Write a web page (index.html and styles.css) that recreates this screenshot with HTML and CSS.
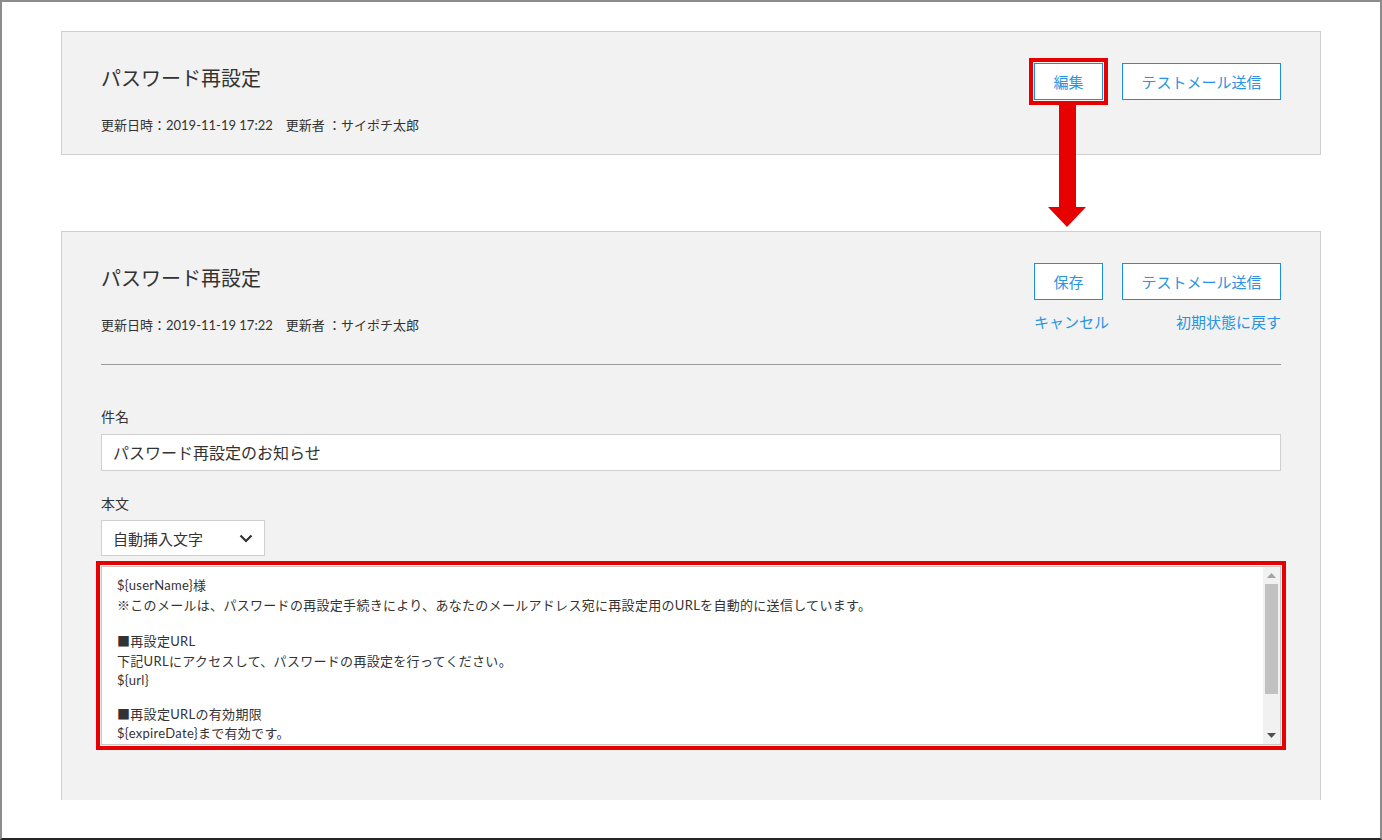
FILE: index.html
```html
<!DOCTYPE html>
<html lang="ja">
<head>
<meta charset="utf-8">
<title>パスワード再設定</title>
<link rel="stylesheet" href="styles.css">
</head>
<body>
<div class="frame">
  <section class="card card-view">
    <div class="card-head">
      <div class="head-left">
        <h2 class="title">パスワード再設定</h2>
        <p class="meta"><span>更新日時：2019-11-19 17:22</span><span class="by">更新者 ：サイポチ太郎</span></p>
      </div>
      <div class="head-right">
        <div class="btns">
          <button class="btn btn-small highlight">編集</button>
          <button class="btn btn-wide">テストメール送信</button>
        </div>
      </div>
    </div>
  </section>

  <svg class="arrow" width="38" height="124" viewBox="0 0 38 124"><polygon points="11,0 28,0 28,104 38,104 19,124 0,104 11,104" fill="#e60000"/></svg>

  <section class="card card-edit">
    <div class="card-head">
      <div class="head-left">
        <h2 class="title">パスワード再設定</h2>
        <p class="meta"><span>更新日時：2019-11-19 17:22</span><span class="by">更新者 ：サイポチ太郎</span></p>
      </div>
      <div class="head-right">
        <div class="btns">
          <button class="btn btn-small">保存</button>
          <button class="btn btn-wide">テストメール送信</button>
        </div>
        <div class="links">
          <a class="link">キャンセル</a>
          <a class="link">初期状態に戻す</a>
        </div>
      </div>
    </div>
    <hr class="divider">
    <label class="label label-subject">件名</label>
    <div class="input">パスワード再設定のお知らせ</div>
    <label class="label label-body">本文</label>
    <div class="select">
      <span>自動挿入文字</span>
      <svg class="chev" width="14" height="9" viewBox="0 0 14 9"><polyline points="1.5,1.5 7,7 12.5,1.5" fill="none" stroke="#333" stroke-width="2.2"/></svg>
    </div>
    <div class="textarea highlight">
      <div class="ta-content">
        <p>${userName}様</p>
        <p>※このメールは、パスワードの再設定手続きにより、あなたのメールアドレス宛に再設定用のURLを自動的に送信しています。</p>
        <p class="gap gap-a"></p>
        <p>■再設定URL</p>
        <p>下記URLにアクセスして、パスワードの再設定を行ってください。</p>
        <p>${url}</p>
        <p class="gap gap-b"></p>
        <p>■再設定URLの有効期限</p>
        <p>${expireDate}まで有効です。</p>
      </div>
      <div class="scrollbar">
        <div class="sb-btn"><svg width="9" height="5" viewBox="0 0 9 5"><polygon points="0,5 4.5,0 9,5" fill="#a3a3a3"/></svg></div>
        <div class="sb-track"><div class="sb-thumb"></div></div>
        <div class="sb-btn"><svg width="9" height="5" viewBox="0 0 9 5"><polygon points="0,0 9,0 4.5,5" fill="#505050"/></svg></div>
      </div>
    </div>
  </section>
</div>
</body>
</html>
```

FILE: styles.css
```css
* { box-sizing: border-box; }
html, body { margin: 0; padding: 0; background: #fff; }
body {
  font-family: Lato, "Noto Sans CJK JP", sans-serif;
  color: #333;
}
.frame {
  position: relative;
  width: 1382px;
  height: 840px;
  border: 2px solid #8c8c8c;
  border-bottom-color: #262626;
  padding: 29px 0 0 59px;
  overflow: hidden;
}
.card {
  width: 1260px;
  background: #f2f2f2;
  border: 1px solid #cfcfcf;
  padding: 31px 39px 19px 39px;
}
.card-edit {
  margin-top: 76px;
  padding-bottom: 55px;
  border-bottom: none;
}
.card-head {
  display: flex;
  justify-content: space-between;
  align-items: flex-start;
}
.title {
  margin: 0;
  font-size: 20px;
  font-weight: normal;
  line-height: 30px;
  color: #333;
}
.meta {
  margin: 22px 0 0;
  font-size: 13px;
  line-height: 20px;
  color: #333;
}
.meta .by { margin-left: 13px; }
.head-right {
  display: flex;
  flex-direction: column;
  width: 247px;
}
.btns {
  display: flex;
  gap: 19px;
}
.btn {
  height: 37px;
  background: #fff;
  border: 1px solid #1a8fe3;
  color: #2a94e2;
  font-family: Lato, "Noto Sans CJK JP", sans-serif;
  font-size: 15px;
  padding: 0;
  cursor: pointer;
}
.btn-small { width: 69px; }
.btn-wide { width: 159px; }
.highlight {
  outline: 4px solid #e60000;
  outline-offset: 1px;
}
.links {
  display: flex;
  justify-content: space-between;
  margin-top: 11px;
}
.link {
  font-size: 15px;
  line-height: 22px;
  color: #2a94e2;
  cursor: pointer;
}
.arrow {
  position: absolute;
  left: 1046px;
  top: 101px;
}
.divider {
  margin: 29px 0 0;
  border: none;
  border-top: 1px solid #9a9a9a;
  height: 0;
}
.label {
  display: block;
  font-size: 14px;
  line-height: 20px;
  color: #333;
}
.label-subject { margin-top: 42px; }
.label-body { margin-top: 23px; }
.input {
  margin-top: 7px;
  height: 37px;
  background: #fff;
  border: 1px solid #cfcfcf;
  padding: 0 11px;
  font-size: 16px;
  line-height: 35px;
  color: #333;
}
.select {
  margin-top: 6px;
  width: 164px;
  height: 36px;
  background: #fff;
  border: 1px solid #cfcfcf;
  padding: 0 10px 0 11px;
  display: flex;
  align-items: center;
  justify-content: space-between;
  font-size: 15px;
  color: #333;
}
.chev { margin-right: 1px; }
.textarea {
  margin-top: 10px;
  height: 179px;
  background: #fff;
  border: 1px solid #c8c8c8;
  display: flex;
}
.ta-content {
  flex: 1;
  padding: 9px 15px;
  font-size: 13px;
  line-height: 19.5px;
  letter-spacing: 0.3px;
  overflow: hidden;
}
.ta-content p { margin: 0; }
.ta-content .gap-a { height: 17px; }
.ta-content .gap-b { height: 14px; }
.scrollbar {
  width: 17px;
  background: #f1f1f1;
  display: flex;
  flex-direction: column;
}
.sb-btn {
  height: 17px;
  display: flex;
  align-items: center;
  justify-content: center;
}
.sb-track {
  flex: 1;
  padding: 0 2px;
}
.sb-thumb {
  height: 110px;
  background: #c1c1c1;
}
```
